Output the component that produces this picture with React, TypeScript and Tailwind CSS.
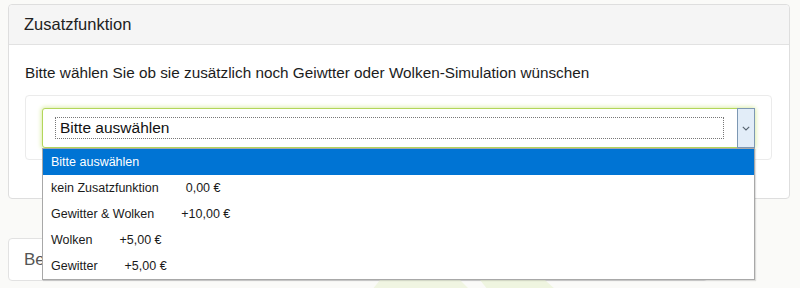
import { useState } from "react";

const options = [
  { label: "Bitte auswählen", price: "" },
  { label: "kein Zusatzfunktion", price: "0,00 €" },
  { label: "Gewitter & Wolken", price: "+10,00 €" },
  { label: "Wolken", price: "+5,00 €" },
  { label: "Gewitter", price: "+5,00 €" },
];

function Chevron() {
  return (
    <svg width="8" height="5" viewBox="0 0 8 5" fill="none">
      <polyline points="0.8,0.8 4,4 7.2,0.8" stroke="#55626f" strokeWidth="1.1" />
    </svg>
  );
}

function Watermark() {
  return (
    <svg
      className="absolute left-[360px] top-[278px]"
      width="220"
      height="12"
      viewBox="0 0 220 12"
    >
      <polygon points="20,2 100,2 110,12 12,12" fill="#f0f5e2" />
      <polygon points="120,2 185,2 196,12 128,12" fill="#eff5e0" />
    </svg>
  );
}

function AddonSelect() {
  const [selected] = useState(0);

  return (
    <div className="relative h-[40px] rounded-[3px] border border-[#b3d65a] bg-white shadow-[0_0_4px_1px_#dcedaa] flex">
      <div className="flex-1 flex items-center pl-[12px] pr-[13px]">
        <div className="w-full h-[22px] border border-dotted border-[#777] flex items-center pl-[4px] text-[15.5px] text-[#111]">
          {options[selected].label}
        </div>
      </div>
      <div className="w-[18px] -my-px -mr-px bg-[#e2edf8] border border-[#7d98b3] flex items-center justify-center">
        <Chevron />
      </div>

      {/* open option list */}
      <ul className="absolute left-[-1px] right-[-1px] top-[39px] z-10 bg-white border border-[#a8a8a8] shadow-[1px_1px_1px_rgba(0,0,0,0.12)] text-[12.5px]">
        {options.map((o, i) => (
          <li
            key={o.label}
            className={
              i === selected
                ? "h-[26px] flex items-center pl-[8px] bg-[#0074d4] text-white"
                : "h-[26px] flex items-center pl-[8px] text-[#1a1a1a]"
            }
          >
            <span>{o.label}</span>
            {o.price && <span className="ml-[27px]">{o.price}</span>}
          </li>
        ))}
      </ul>
    </div>
  );
}

export default function App() {
  return (
    <div className="relative w-[800px] h-[288px] overflow-hidden bg-[#fafaf8] pt-[4px] pl-[8px] pr-[10px] font-['Liberation_Sans',Arial,sans-serif]">
      <Watermark />

      <section className="relative rounded-[4px] border border-[#dedede] bg-white">
        <div className="h-[40px] flex items-center px-[15px] bg-[#f5f5f5] border-b border-[#e2e2e2] rounded-t-[4px] text-[16.5px] text-[#222]">
          Zusatzfunktion
        </div>
        <div className="pt-[17px] pl-[16px] pr-[17px] pb-[38px]">
          <p className="text-[15.3px] leading-[22px] text-[#1c1c1c]">
            Bitte wählen Sie ob sie zusätzlich noch Geiwtter oder Wolken-Simulation wünschen
          </p>
          <div className="mt-[11px] rounded-[4px] border border-[#ebebeb] bg-white pt-[12px] pl-[16px] pr-[16px] pb-[11px]">
            <AddonSelect />
          </div>
        </div>
      </section>

      <section className="mt-[39px] w-[700px] h-[43px] rounded-[4px] border border-[#e2e2e2] bg-white flex items-center px-[15px] text-[17px] text-[#555]">
        Bestellung
      </section>
    </div>
  );
}
